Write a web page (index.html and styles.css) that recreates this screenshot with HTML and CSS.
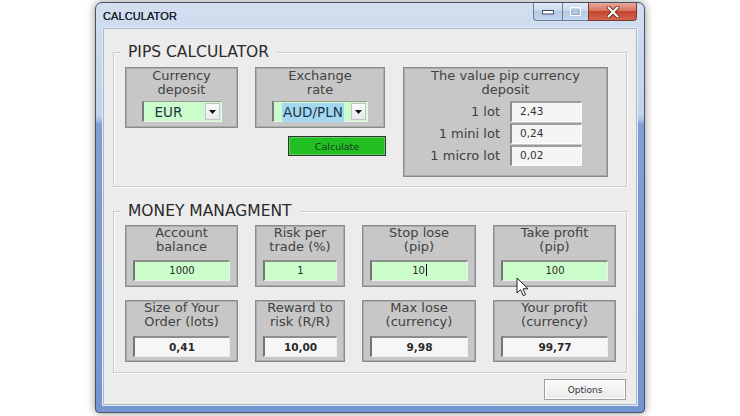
FILE: index.html
```html
<!DOCTYPE html>
<html>
<head>
<meta charset="utf-8">
<title>CALCULATOR</title>
<link rel="stylesheet" href="styles.css">
</head>
<body>
<div class="window">
  <div class="titlebar">
    <span class="title">CALCULATOR</span>
    <div class="controls">
      <span class="ctl ctl-min"><svg width="12" height="6" viewBox="0 0 12 6"><rect x="0.5" y="1.5" width="11" height="3.5" fill="#fff" stroke="#3d4a5e" stroke-width="1"/></svg></span>
      <span class="ctl ctl-max"><svg width="11" height="9" viewBox="0 0 11 9"><rect x="0.5" y="0.5" width="10" height="8" fill="none" stroke="#fff" stroke-width="1"/><rect x="2" y="3" width="7" height="4.5" fill="none" stroke="#8fa4c2" stroke-width="1"/></svg></span>
      <span class="ctl ctl-close"><svg width="14" height="12" viewBox="0 0 14 12"><path d="M2.5 1.5 L11.5 10.5 M11.5 1.5 L2.5 10.5" stroke="#4a1a14" stroke-width="3.6" stroke-linecap="round"/><path d="M2.5 1.5 L11.5 10.5 M11.5 1.5 L2.5 10.5" stroke="#fff" stroke-width="2.2" stroke-linecap="round"/></svg></span>
    </div>
  </div>
  <div class="client">
    <section class="group group-pips">
      <div class="legend">PIPS CALCULATOR</div>
      <div class="pips-body">
        <div class="pips-left">
          <div class="pips-row">
            <div class="panel panel-currency">
              <div class="label">Currency<br>deposit</div>
              <div class="combo combo-eur">
                <span class="combo-text">EUR</span>
                <span class="combo-btn"><svg width="7" height="4" viewBox="0 0 7 4"><path d="M0 0 H7 L3.5 4 Z" fill="#111"/></svg></span>
              </div>
            </div>
            <div class="panel panel-rate">
              <div class="label">Exchange<br>rate</div>
              <div class="combo combo-rate">
                <span class="combo-text"><span class="selected">AUD/PLN</span></span>
                <span class="combo-btn"><svg width="7" height="4" viewBox="0 0 7 4"><path d="M0 0 H7 L3.5 4 Z" fill="#111"/></svg></span>
              </div>
            </div>
          </div>
          <div class="calc-row"><button class="btn-calc">Calculate</button></div>
        </div>
        <div class="panel panel-value">
          <div class="label">The value pip currency<br>deposit</div>
          <div class="value-rows">
            <div class="value-row"><span class="value-label">1 lot</span><span class="value-box">2,43</span></div>
            <div class="value-row"><span class="value-label">1 mini lot</span><span class="value-box">0,24</span></div>
            <div class="value-row"><span class="value-label">1 micro lot</span><span class="value-box">0,02</span></div>
          </div>
        </div>
      </div>
    </section>

    <section class="group group-money">
      <div class="legend">MONEY MANAGMENT</div>
      <div class="money-grid">
        <div class="panel">
          <div class="label">Account<br>balance</div>
          <div class="field field-in">1000</div>
        </div>
        <div class="panel">
          <div class="label">Risk per<br>trade (%)</div>
          <div class="field field-in">1</div>
        </div>
        <div class="panel">
          <div class="label">Stop lose<br>(pip)</div>
          <div class="field field-in">10<span class="caret"></span></div>
        </div>
        <div class="panel">
          <div class="label">Take profit<br>(pip)</div>
          <div class="field field-in">100</div>
        </div>
        <div class="panel">
          <div class="label">Size of Your<br>Order (lots)</div>
          <div class="field field-out">0,41</div>
        </div>
        <div class="panel">
          <div class="label">Reward to<br>risk (R/R)</div>
          <div class="field field-out">10,00</div>
        </div>
        <div class="panel">
          <div class="label">Max lose<br>(currency)</div>
          <div class="field field-out">9,98</div>
        </div>
        <div class="panel">
          <div class="label">Your profit<br>(currency)</div>
          <div class="field field-out">99,77</div>
        </div>
      </div>
    </section>

    <div class="footer"><button class="btn-options">Options</button></div>
  </div>
</div>
<svg class="cursor" width="14" height="20" viewBox="0 0 14 20"><path d="M1 1 L1 16 L4.6 12.6 L7.2 18.6 L9.6 17.6 L7 11.8 L12 11.8 Z" fill="#fff" stroke="#222" stroke-width="1" stroke-linejoin="round"/></svg>
</body>
</html>
```
FILE: styles.css
```css
* { box-sizing: border-box; }

html, body {
  margin: 0;
  padding: 0;
}

body {
  width: 740px;
  height: 416px;
  overflow: hidden;
  background: #ffffff;
  font-family: "DejaVu Sans", Verdana, sans-serif;
  position: relative;
}

.window {
  margin: 2px 0 0 95px;
  width: 550px;
  height: 411px;
  border: 1px solid #46536a;
  border-radius: 7px 7px 4px 4px;
  padding: 0 7px 7px 7px;
  background-color: #7b9bd2;
  background-image: linear-gradient(to bottom, #d3dff0 0px, #c9d7eb 60px, #c2d2e9 112px, #a9c0e2 117px, #7f9fd4 121px, #7495cf 411px);
  box-shadow: 0 0 9px rgba(0, 0, 0, 0.45);
  display: flex;
  flex-direction: column;
}

.titlebar {
  height: 25px;
  display: flex;
  align-items: flex-start;
}

.title {
  align-self: center;
  margin-top: 1px;
  font-family: "Liberation Sans", Arial, sans-serif;
  font-size: 11px;
  color: #1a212c;
  letter-spacing: 0.1px;
  text-shadow: 0 0 0.4px #1a212c;
}

.controls {
  margin-left: auto;
  display: flex;
  height: 18px;
}

.ctl {
  display: flex;
  align-items: center;
  justify-content: center;
  height: 18px;
  border: 1px solid #6a7c96;
  border-top: none;
}

.ctl-min {
  width: 29px;
  border-radius: 0 0 0 4px;
  border-right: none;
  background: linear-gradient(to bottom, #e2eaf5 0, #cbd9ec 45%, #b4c8e4 50%, #c5d6ee 100%);
}

.ctl-max {
  width: 26px;
  border-right: none;
  background: linear-gradient(to bottom, #e2eaf5 0, #cbd9ec 45%, #b4c8e4 50%, #c5d6ee 100%);
}

.ctl-close {
  width: 49px;
  border-radius: 0 0 4px 0;
  border-color: #7a3a32;
  background: linear-gradient(to bottom, #e9a797 0, #d87462 45%, #c7442f 50%, #d0664c 100%);
}

.client {
  width: 534px;
  height: 377px;
  background: #ececec;
  border: 1px solid #a7b8cf;
  box-shadow: 0 0 0 1px #e4ebf5;
  padding: 23px 9px 0 9px;
}

.group {
  border: 1px solid #cdcdcd;
  box-shadow: inset 1px 1px 0 #fafafa, 1px 1px 0 #fafafa;
}

.group-pips {
  height: 135px;
}

.group-money {
  margin-top: 24px;
  height: 162px;
}

.legend {
  margin: -11px 0 0 6px;
  padding: 0 8px;
  width: max-content;
  height: 20px;
  line-height: 20px;
  background: #ececec;
  font-size: 15.5px;
  color: #2a2a2a;
}

.pips-body {
  margin-top: 5px;
  padding-left: 11px;
  display: flex;
  gap: 17px;
}

.pips-left {
  width: 261px;
}

.pips-row {
  display: flex;
  gap: 17px;
}

.panel {
  background: #c7c7c7;
  border: 1px solid #8b8b8b;
  box-shadow: inset 0 0 0 1px #ababab;
}

.panel-currency {
  width: 113px;
  height: 61px;
  padding-top: 1px;
}

.panel-rate {
  width: 130px;
  height: 61px;
  padding-top: 1px;
}

.label {
  text-align: center;
  font-size: 13px;
  line-height: 14px;
  color: #424242;
}

.combo {
  margin: 4px auto 0;
  height: 21px;
  display: flex;
  align-items: center;
  background: #cbfccb;
  border-left: 2px solid #787878;
  border-top: 1px solid #9a9a9a;
  border-right: 1px solid #f2f2f2;
  border-bottom: 1px solid #f2f2f2;
}

.combo-eur { width: 80px; }
.combo-rate { width: 96px; }

.combo-text {
  flex: 1;
  font-size: 13.5px;
  color: #1b3447;
  padding-left: 11px;
}

.combo-rate .combo-text { padding-left: 8px; }

.selected {
  background: #a4d8f0;
  padding: 1px 1px 2px;
}

.combo-btn {
  width: 15px;
  height: 17px;
  margin-right: 1px;
  background: linear-gradient(to bottom, #fbfbfb, #e9e9e9);
  border: 1px solid #c4c4c4;
  display: flex;
  align-items: center;
  justify-content: center;
}

.calc-row {
  margin-top: 8px;
  display: flex;
  justify-content: flex-end;
}

.btn-calc {
  width: 98px;
  height: 20px;
  padding: 0;
  margin: 0;
  background: #21bf21;
  border: 1px solid #303030;
  box-shadow: inset 0 0 0 1px #58d058;
  font-family: "DejaVu Sans", Verdana, sans-serif;
  font-size: 9.5px;
  color: #1a361a;
}

.panel-value {
  width: 205px;
  height: 110px;
  padding-top: 1px;
}

.value-rows {
  margin-top: 4px;
  padding-right: 25px;
  display: flex;
  flex-direction: column;
  gap: 1px;
}

.value-row {
  display: grid;
  grid-template-columns: 1fr 72px;
  column-gap: 10px;
  height: 21px;
}

.value-label {
  text-align: right;
  font-size: 13px;
  line-height: 21px;
  color: #404040;
}

.value-box {
  background: #f5f5f5;
  border-left: 2px solid #8a8a8a;
  border-top: 2px solid #9c9c9c;
  border-right: 1px solid #fdfdfd;
  border-bottom: 1px solid #fdfdfd;
  padding-left: 8px;
  font-size: 10.5px;
  line-height: 17px;
  color: #333;
}

.money-grid {
  margin-top: 4px;
  padding-left: 11px;
  display: grid;
  grid-template-columns: 113px 90px 114px 123px;
  grid-template-rows: 62px 62px;
  column-gap: 17px;
  row-gap: 13px;
}

.field {
  margin: 6px 7px 0;
  height: 21px;
  text-align: center;
  border-left: 2px solid #747474;
  border-top: 2px solid #8e8e8e;
  border-right: 1px solid #efefef;
  border-bottom: 1px solid #efefef;
  line-height: 18px;
  color: #2a2a2a;
}

.field-in {
  background: #cbfdcb;
  font-size: 10px;
}

.field-out {
  margin-top: 7px;
  background: #f6f6f6;
  font-size: 10.5px;
  font-weight: bold;
}

.caret {
  display: inline-block;
  width: 0;
  height: 12px;
  margin-left: 1px;
  border-left: 1px solid #111;
  vertical-align: -2px;
}

.footer {
  margin-top: 6px;
  display: flex;
  justify-content: flex-end;
  padding-right: 1px;
}

.btn-options {
  width: 82px;
  height: 21px;
  padding: 0;
  margin: 0;
  background: linear-gradient(to bottom, #fbfbfb, #e9e9e9);
  border: 1px solid #9d9d9d;
  box-shadow: inset 0 0 0 1px #ffffff;
  font-family: "DejaVu Sans", Verdana, sans-serif;
  font-size: 9px;
  color: #333;
}

.cursor {
  position: absolute;
  left: 516px;
  top: 277px;
}
```
